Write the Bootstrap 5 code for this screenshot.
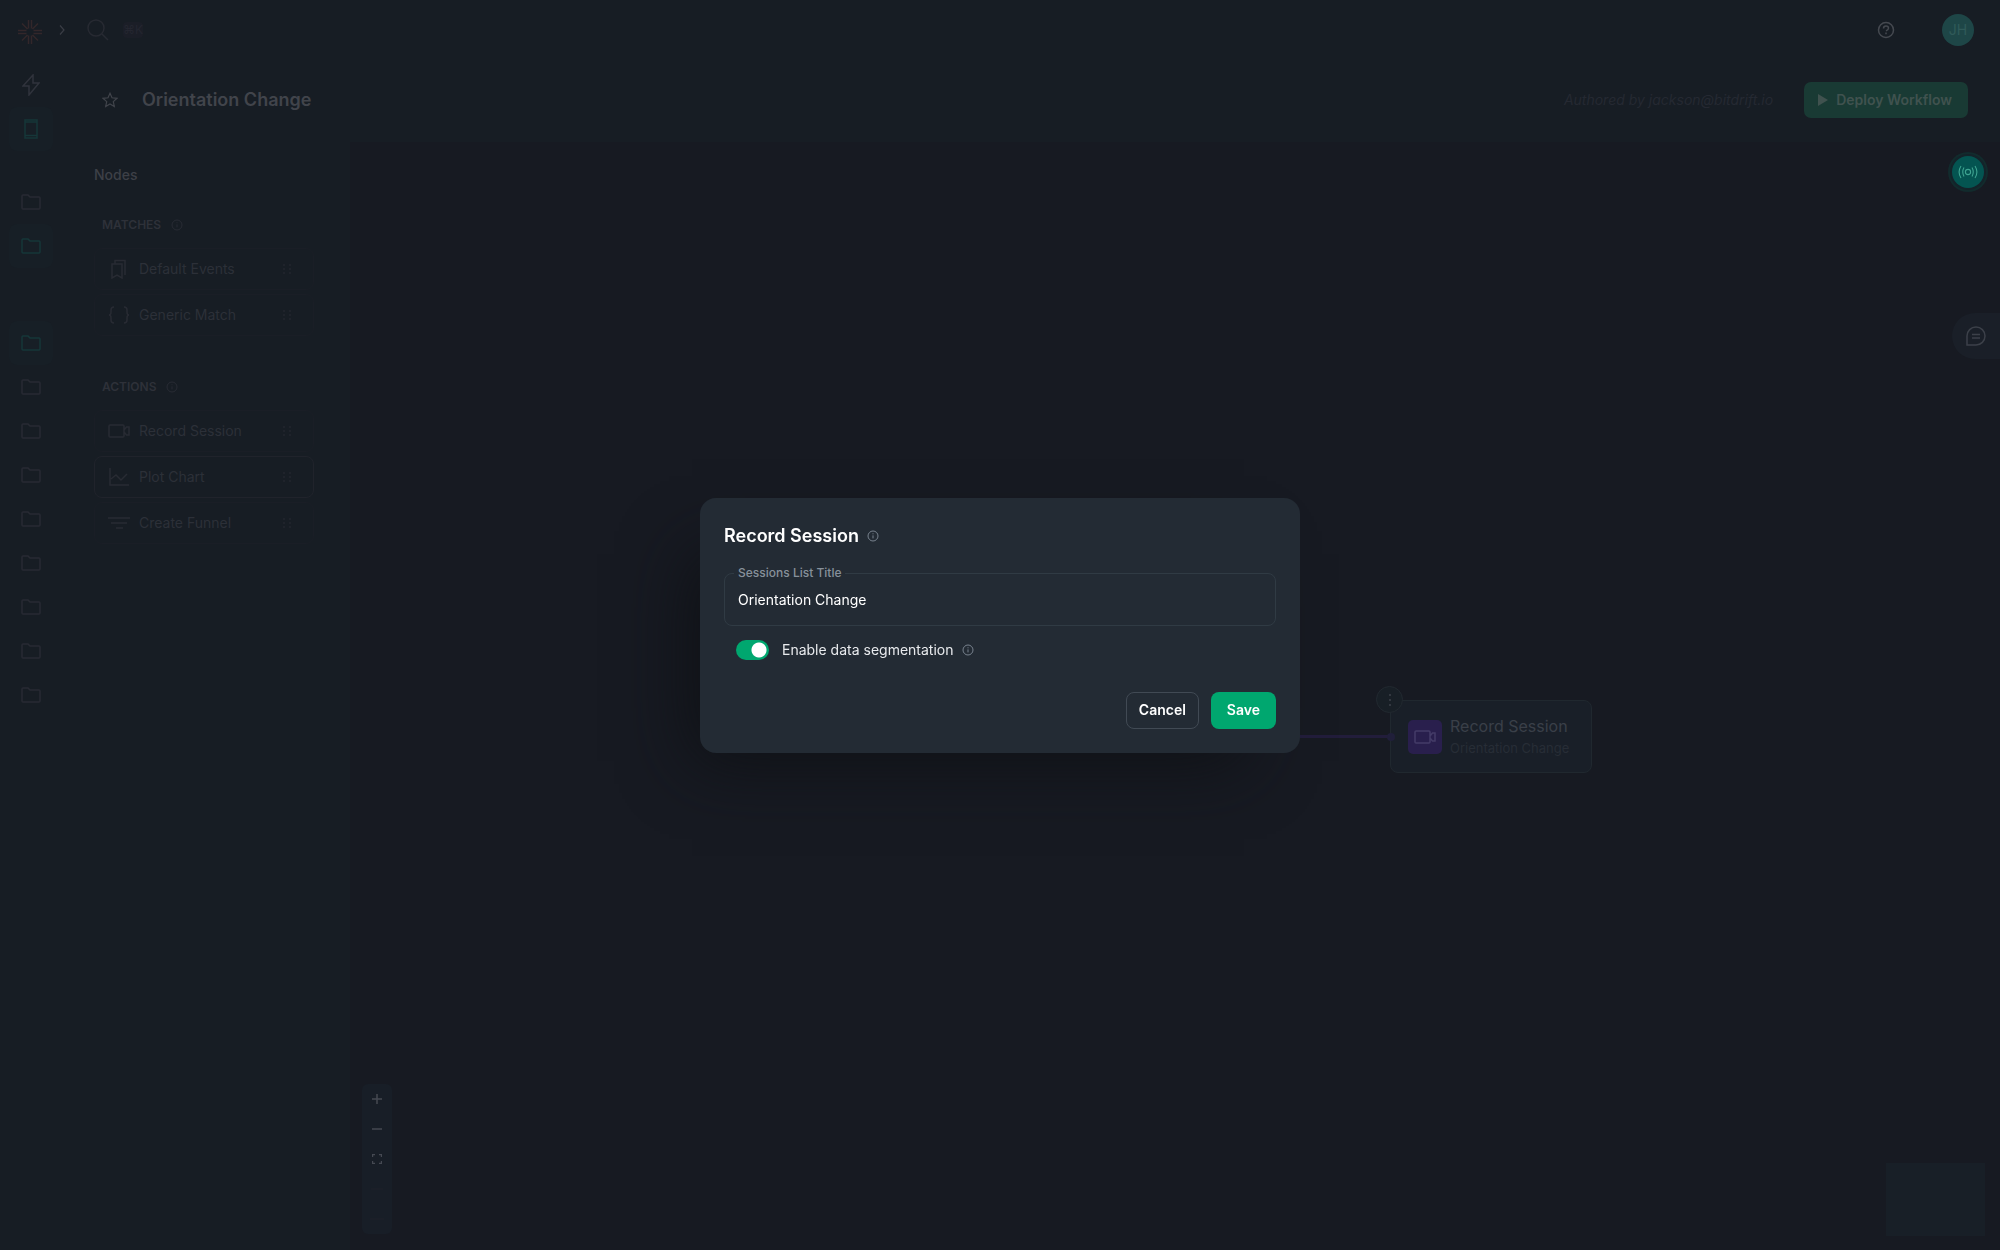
<!DOCTYPE html>
<html lang="en" data-bs-theme="dark">
<head>
<meta charset="utf-8">
<meta name="viewport" content="width=device-width, initial-scale=1">
<title>Orientation Change</title>
<link rel="stylesheet" href="https://cdn.jsdelivr.net/npm/bootstrap@5.3.0/dist/css/bootstrap.min.css">
<style>
body { font-family: Inter, "Liberation Sans", sans-serif; font-size: 14px; line-height: 22px; background: #171d24; color: #30343c; }
svg { display: block; fill: none; stroke: currentColor; stroke-width: 1.5; flex: none; }
button { font: inherit; color: inherit; background: none; border: 0; padding: 0; }
.topbar { height: 60px; padding: 0 22px 0 0; }
.rail { width: 62px; padding-top: 3px; }
.brand-link { width: 59px; padding-left: 16px; padding-top: 4px; color: #33272a; }
.rail-link { width: 44px; height: 44px; margin-left: 9px; color: #282a33; border-radius: 8px; display: flex; align-items: center; justify-content: center; }
.rail-link.bolt { color: #30333c; }
.rail-link.on { color: #163739; background: #171f26; }
.rail-top { margin-bottom: 29px; }
.rail-mid { margin-bottom: 53px; }
.search-btn { margin-left: 22px; }
.key-hint { font-size: 12px; color: #242630; background: #1b1e27; border-radius: 4px; line-height: 16px; margin-left: 14px; }
.help-btn { margin-right: 47px; }
.avatar-dot { width: 32px; height: 32px; border-radius: 50%; background: #1e4647; color: #305a59; }
.title-row { height: 82px; padding: 0 32px 2px 40px; }
.flow-title { font-size: 18px; line-height: 28px; font-weight: 600; color: #41444b; margin: 0; }
.author-note { color: #252932; font-style: italic; font-size: 14px; margin-right: 31px; }
.deploy-btn { height: 36px; padding: 0 16px 0 13px; border-radius: 7px; background: #193a34; color: #40524f; font-weight: 600; gap: 7px; }
.side-panel { width: 288px; padding: 22px 36px 0 32px; }
.panel-head { font-size: 14px; line-height: 22px; font-weight: 500; color: #3d4047; margin: 0 0 28px; }
.group-head { font-size: 12px; line-height: 22px; font-weight: 600; color: #2e3139; margin: 0 0 12px 8px; gap: 10px; display: flex; align-items: center; }
.group-head svg { color: #282b34; }
.node-item { height: 42px; padding: 0 18px 0 13px; gap: 9px; border: 1px solid #1a1e26; border-radius: 8px; margin-bottom: 4px; color: #2c3038; text-align: left; }
.node-item svg { color: #282b33; }
.node-item.lined { border-color: #20232b; }
.node-item svg.grip { color: #1f232b; margin-left: auto; }
.node-group { margin-bottom: 36px; }
.flow-canvas { background: #171a22; }
.flow-node { left: 1040px; top: 558px; width: 202px; height: 73px; padding: 0 17px; gap: 8px; border: 1px solid #20282f; border-radius: 8px; background: #191f28; }
.flow-node .tile-ico { width: 34px; height: 34px; border-radius: 5px; background: #291f4d; color: #443c68; }
.flow-node .node-name { font-size: 16px; line-height: 22px; color: #3a3f48; }
.flow-node .node-sub { font-size: 13px; line-height: 22px; color: #272d36; }
.node-menu { left: 1026px; top: 544px; width: 27px; height: 27px; border: 1px solid #222930; border-radius: 50%; background: #181f26; color: #3d424a; }
.flow-edge { left: 400px; top: 593px; width: 640px; height: 3px; background: #221d3b; }
.flow-port { left: 1037px; top: 591px; width: 8px; height: 8px; border-radius: 50%; background: #201f3a; }
.zoom-bar { left: 12px; bottom: 16px; width: 30px; background: #181e27; border-radius: 6px; color: #454952; }
.zoom-bar button { height: 30px; }
.zoom-bar .off { color: #1c212a; }
.mini-map { right: 15px; bottom: 14px; width: 99px; height: 73px; background: #181f27; }
.live-btn { right: 16px; top: 14px; width: 32px; height: 32px; border-radius: 50%; background: #045451; color: #3ea491; box-shadow: 0 0 0 2px #14232a, 0 0 0 4px #122b2d; }
.chat-btn { right: 0; top: 171px; width: 48px; height: 46px; border-radius: 23px 0 0 23px; background: #1a1f28; color: #3c4049; }
.modal-dialog { max-width: 600px; }
.dialog-box { background: #232b34; border: 0; border-radius: 16px; padding: 24px; box-shadow: -32px 32px 64px -24px #0f1115; color: #fff; }
.dialog-title { font-size: 18px; line-height: 28px; font-weight: 600; margin: 0; }
.tip-ico { color: #78828e; }
.field-wrap { margin-top: 23px; }
.field-wrap label { left: 10px; top: -11px; padding: 0 4px; font-size: 12px; line-height: 22px; font-weight: 500; color: #87919b; background: #232b34; }
.text-field { display: block; width: 100%; height: 53px; padding: 0 13px; font-size: 14px; color: #fff; background: none; border: 1px solid #303b44; border-radius: 8px; outline: 0; }
.switch-row { margin: 12px 0 0 12px; height: 24px; }
.switch-row .form-check-input { width: 33px; height: 20px; margin: 0; border: 0; background-color: #00a76f; box-shadow: none; }
.switch-row .form-check-input:checked { background-image: radial-gradient(circle, #fff 7px, transparent 8px); background-repeat: no-repeat; background-size: 16px; background-position: right 2px center; }
.switch-row label { margin: 0 9px 0 13px; color: #e8eaed; }
.dialog-foot { margin-top: 30px; gap: 12px; }
.dialog-btn { height: 37px; border-radius: 8px; font-weight: 600; padding: 0 16px; color: #fff; }
.dialog-btn.plain { border: 1px solid #414a54; padding: 0 12px; }
.dialog-btn.save { background: #00a76f; }
</style>
<script src="https://cdn.jsdelivr.net/npm/bootstrap@5.3.0/dist/js/bootstrap.bundle.min.js"></script>
</head>
<body>
<svg class="d-none">
  <symbol id="folder" viewBox="0 0 20 16"><path d="M1 14V2Q1 1 2 1h5l2 2h9q1 0 1 1v10q0 1-1 1H2q-1 0-1-1z"/></symbol>
  <symbol id="info" viewBox="0 0 12 12"><g stroke-width="1"><circle cx="6" cy="6" r="5"/><path d="M6 5.400v3M6 3.300v1"/></g></symbol>
  <symbol id="grip" viewBox="0 0 16 16"><path d="M5 3v2M5 7v2M5 11v2M11 3v2M11 7v2M11 11v2" stroke-width="2"/></symbol>
  <symbol id="cam" viewBox="0 0 22 14"><path d="M1 2q0-1 1-1h13q1 0 1 1v10q0 1-1 1H2q-1 0-1-1zM16 6l2.500-3H21v8h-2.500L16 8"/></symbol>
</svg>
<div class="d-flex flex-column min-vh-100">
  <header class="topbar d-flex align-items-center">
    <a class="brand-link" href="#" aria-label="Home"><svg width="28" height="26" viewBox="0 0 28 26"><path stroke-width="1.500" d="M12.500 1v8.500M15.500 1v8.500M2 11.500h8.500M2 14.500h8.500M26 11.500h-8.500M26 14.500h-8.500M12.500 25v-8.500M15.500 25v-8.500M6 4.500l5.500 5.500M22 4.500l-5.500 5.500M6 21.500l5.500-5.500M22 21.500l-5.500-5.500"/></svg></a>
    <button aria-label="Expand"><svg width="6" height="12" viewBox="0 0 6 12" style="color:#3a3d45"><path stroke-width="1.200" d="M1 1.500l4 4.500-4 4.500"/></svg></button>
    <button class="search-btn" aria-label="Search"><svg width="22" height="22" viewBox="0 0 22 22" style="color:#272a32"><circle cx="9" cy="9" r="8"/><path d="M15 15l6 6"/></svg></button>
    <span class="key-hint">⌘K</span>
    <button class="help-btn ms-auto" aria-label="Help"><svg width="18" height="18" viewBox="0 0 18 18" style="color:#454950"><circle cx="9" cy="9" r="7.500"/><path d="M6.500 7.500Q6.500 5 9 5t2.500 2.200Q11.500 8.500 9 9.800M9 11.500v1.700"/></svg></button>
    <button class="avatar-dot d-flex align-items-center justify-content-center me-1">JH</button>
  </header>
  <div class="d-flex flex-grow-1">
    <nav class="rail" aria-label="Main">
      <a class="rail-link bolt" href="#" aria-label="Events"><svg width="18" height="22" viewBox="0 0 18 22"><path d="M11 1L1 12h6v9L17 9h-6z"/></svg></a>
      <a class="rail-link on rail-top" href="#" aria-label="Device"><svg width="16" height="20" viewBox="0 0 16 20"><path d="M2 1h12v18H2zM2 3h12M2 16.500h12"/></svg></a>
      <a class="rail-link" href="#" aria-label="Folder"><svg width="20" height="16"><use href="#folder"/></svg></a>
      <a class="rail-link on rail-mid" href="#" aria-label="Folder"><svg width="20" height="16"><use href="#folder"/></svg></a>
      <a class="rail-link on" href="#" aria-label="Folder"><svg width="20" height="16"><use href="#folder"/></svg></a>
      <a class="rail-link" href="#" aria-label="Folder"><svg width="20" height="16"><use href="#folder"/></svg></a>
      <a class="rail-link" href="#" aria-label="Folder"><svg width="20" height="16"><use href="#folder"/></svg></a>
      <a class="rail-link" href="#" aria-label="Folder"><svg width="20" height="16"><use href="#folder"/></svg></a>
      <a class="rail-link" href="#" aria-label="Folder"><svg width="20" height="16"><use href="#folder"/></svg></a>
      <a class="rail-link" href="#" aria-label="Folder"><svg width="20" height="16"><use href="#folder"/></svg></a>
      <a class="rail-link" href="#" aria-label="Folder"><svg width="20" height="16"><use href="#folder"/></svg></a>
      <a class="rail-link" href="#" aria-label="Folder"><svg width="20" height="16"><use href="#folder"/></svg></a>
      <a class="rail-link" href="#" aria-label="Folder"><svg width="20" height="16"><use href="#folder"/></svg></a>
    </nav>
    <div class="d-flex flex-column flex-grow-1">
      <div class="title-row d-flex align-items-center">
        <button aria-label="Favorite"><svg width="16" height="16" viewBox="0 0 16 16" style="color:#41444b"><path stroke-width="1.200" d="M8 1.300l2 4.500 5 .5-3.700 3.300 1 4.900L8 12l-4.300 2.500 1-4.900L1 6.300l5-.5z"/></svg></button>
        <h1 class="flow-title ms-4">Orientation Change</h1>
        <span class="author-note ms-auto">Authored by jackson@bitdrift.io</span>
        <button class="deploy-btn d-flex align-items-center"><svg width="12" height="12" viewBox="0 0 12 12"><path d="M1 0l10 6-10 6z" fill="currentColor" stroke="none"/></svg>Deploy Workflow</button>
      </div>
      <div class="d-flex flex-grow-1">
        <aside class="side-panel">
          <h2 class="panel-head">Nodes</h2>
          <section class="node-group d-flex flex-column">
            <h3 class="group-head">MATCHES <svg width="12" height="12"><use href="#info"/></svg></h3>
            <button class="node-item d-flex align-items-center"><svg width="22" height="20" viewBox="0 0 22 20"><path d="M4 5h10v14l-5-3-5 3zM7 5V1.500h10V16"/></svg>Default Events<svg class="grip" width="16" height="16"><use href="#grip"/></svg></button>
            <button class="node-item d-flex align-items-center"><svg width="22" height="18" viewBox="0 0 22 18"><path d="M6 1Q3 1 3 4v2q0 3-2 3 2 0 2 3v2q0 3 3 3M16 1q3 0 3 3v2q0 3 2 3-2 0-2 3v2q0 3-3 3"/></svg>Generic Match<svg class="grip" width="16" height="16"><use href="#grip"/></svg></button>
          </section>
          <section class="node-group d-flex flex-column">
            <h3 class="group-head">ACTIONS <svg width="12" height="12"><use href="#info"/></svg></h3>
            <button class="node-item d-flex align-items-center"><svg width="22" height="14"><use href="#cam"/></svg>Record Session<svg class="grip" width="16" height="16"><use href="#grip"/></svg></button>
            <button class="node-item lined d-flex align-items-center"><svg width="22" height="20" viewBox="0 0 22 20"><path d="M2 1v17h19M3 12l5-4 5 5 6-6"/></svg>Plot Chart<svg class="grip" width="16" height="16"><use href="#grip"/></svg></button>
            <button class="node-item d-flex align-items-center"><svg width="22" height="14" viewBox="0 0 22 14"><path d="M0 2h22M3 7h16M8 12h7"/></svg>Create Funnel<svg class="grip" width="16" height="16"><use href="#grip"/></svg></button>
          </section>
        </aside>
        <main class="flow-canvas flex-grow-1 position-relative overflow-hidden">
          <div class="flow-edge position-absolute"></div>
          <div class="flow-node position-absolute d-flex align-items-center">
            <span class="tile-ico d-flex align-items-center justify-content-center"><svg width="22" height="14"><use href="#cam"/></svg></span>
            <div class="text-nowrap"><div class="node-name">Record Session</div><div class="node-sub">Orientation Change</div></div>
          </div>
          <div class="flow-port position-absolute"></div>
          <button class="node-menu position-absolute d-flex align-items-center justify-content-center" aria-label="Node menu"><svg width="4" height="14" viewBox="0 0 4 14"><path d="M2 1v2M2 6v2M2 11v2"/></svg></button>
          <div class="zoom-bar position-absolute d-flex flex-column">
            <button class="d-flex align-items-center justify-content-center" aria-label="Zoom in"><svg width="10" height="10" viewBox="0 0 10 10"><path d="M5 0v10M0 5h10"/></svg></button>
            <button class="d-flex align-items-center justify-content-center" aria-label="Zoom out"><svg width="10" height="10" viewBox="0 0 10 10"><path d="M0 5h10"/></svg></button>
            <button class="d-flex align-items-center justify-content-center" aria-label="Fit view"><svg width="10" height="10" viewBox="0 0 10 10"><path stroke-width="1.200" d="M.6 3V.6H3M7 .6h2.400V3M9.400 7v2.400H7M3 9.400H.6V7"/></svg></button>
            <button class="off d-flex align-items-center justify-content-center" aria-label="Undo"><svg width="12" height="6" viewBox="0 0 12 6"><path d="M0 3h12"/></svg></button>
            <button class="off d-flex align-items-center justify-content-center" aria-label="Redo"><svg width="14" height="6" viewBox="0 0 14 6"><path d="M0 3h14"/></svg></button>
          </div>
          <div class="mini-map position-absolute"></div>
          <button class="live-btn position-absolute d-flex align-items-center justify-content-center" aria-label="Live"><svg width="20" height="14" viewBox="0 0 20 14"><g stroke-width="1.100"><circle cx="10" cy="7" r="2.600"/><path d="M6 2.500Q3.500 7 6 11.500M14 2.500q2.500 4.500 0 9M3 1Q-.8 7 3 13M17 1q3.800 6 0 12"/></g></svg></button>
          <button class="chat-btn position-absolute d-flex align-items-center justify-content-center" aria-label="Feedback"><svg width="20" height="20" viewBox="0 0 20 20"><path d="M1 19v-9a9 9 0 1 1 9 9zM6 8.500h8M6 12h8"/></svg></button>
        </main>
      </div>
    </div>
  </div>
</div>
<div class="modal d-block" role="dialog" aria-labelledby="dlg-title">
  <div class="modal-dialog modal-dialog-centered">
    <form class="modal-content dialog-box">
      <div class="d-flex align-items-center gap-2">
        <h2 class="dialog-title" id="dlg-title">Record Session</h2>
        <svg class="tip-ico" width="12" height="12"><use href="#info"/></svg>
      </div>
      <div class="field-wrap position-relative">
        <label class="position-absolute" for="list-title">Sessions List Title</label>
        <input class="text-field" id="list-title" type="text" value="Orientation Change">
      </div>
      <div class="switch-row form-switch d-flex align-items-center p-0">
        <input class="form-check-input" type="checkbox" role="switch" id="seg" checked>
        <label for="seg">Enable data segmentation</label>
        <svg class="tip-ico" width="12" height="12"><use href="#info"/></svg>
      </div>
      <div class="dialog-foot d-flex justify-content-end">
        <button type="button" class="dialog-btn plain">Cancel</button>
        <button type="submit" class="dialog-btn save">Save</button>
      </div>
    </form>
  </div>
</div>
</body>
</html>
